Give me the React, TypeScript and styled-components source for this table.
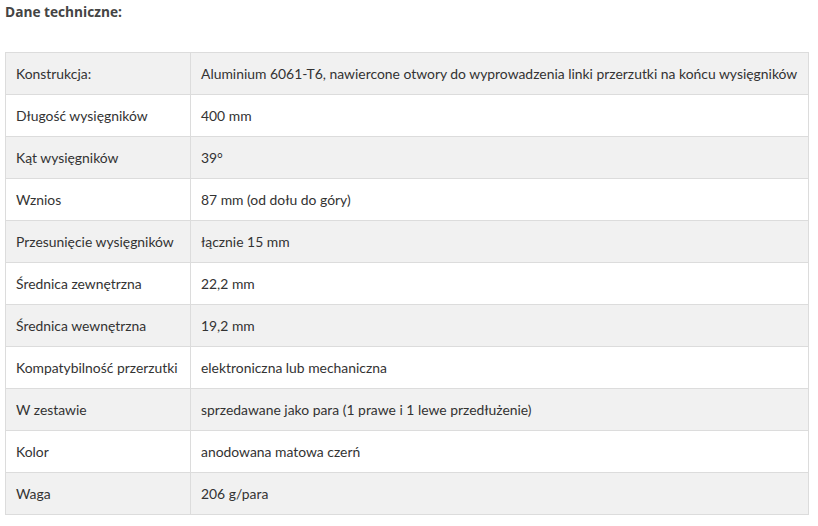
import styled, { createGlobalStyle } from 'styled-components';

const GlobalStyle = createGlobalStyle`
  body {
    margin: 0;
    background: #fff;
    font-family: Lato, "Open Sans", sans-serif;
    color: #333;
  }
`;

const specs: [string, string][] = [
  ['Konstrukcja:', 'Aluminium 6061-T6, nawiercone otwory do wyprowadzenia linki przerzutki na końcu wysięgników'],
  ['Długość wysięgników', '400 mm'],
  ['Kąt wysięgników', '39°'],
  ['Wznios', '87 mm (od dołu do góry)'],
  ['Przesunięcie wysięgników', 'łącznie 15 mm'],
  ['Średnica zewnętrzna', '22,2 mm'],
  ['Średnica wewnętrzna', '19,2 mm'],
  ['Kompatybilność przerzutki', 'elektroniczna lub mechaniczna'],
  ['W zestawie', 'sprzedawane jako para (1 prawe i 1 lewe przedłużenie)'],
  ['Kolor', 'anodowana matowa czerń'],
  ['Waga', '206 g/para'],
];

export default function App() {
  return (
    <>
      <GlobalStyle />
      <Wrapper>
        <Heading>Dane techniczne:</Heading>
        <SpecTable>
          <tbody>
            {specs.map(([label, value], i) => (
              <Row key={label} $striped={i % 2 === 0}>
                <LabelCell>{label}</LabelCell>
                <ValueCell>{value}</ValueCell>
              </Row>
            ))}
          </tbody>
        </SpecTable>
      </Wrapper>
    </>
  );
}

const Wrapper = styled.div`
  padding: 4px 0 0 5px;
`;

const Heading = styled.div`
  font-family: "Open Sans", Lato, sans-serif;
  font-size: 13.7px;
  font-weight: 700;
  color: #444;
  line-height: 16px;
  margin-bottom: 32px;
`;

const SpecTable = styled.table`
  width: 804px;
  table-layout: fixed;
  border-collapse: collapse;
  font-size: 13.9px;
  color: #333;
`;

const Row = styled.tr<{ $striped: boolean }>`
  height: 42px;
  background: ${({ $striped }) => ($striped ? '#f1f1f1' : '#fff')};
`;

const LabelCell = styled.td`
  width: 185px;
  box-sizing: border-box;
  padding: 0 10px;
  border: 1px solid #dcdcdc;
  white-space: nowrap;
`;

const ValueCell = styled.td`
  padding: 0 10px;
  border: 1px solid #dcdcdc;
  white-space: nowrap;
`;
